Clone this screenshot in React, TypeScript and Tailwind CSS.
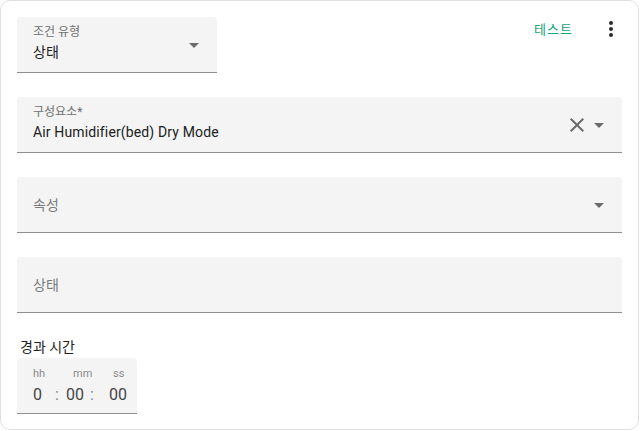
import React from "react";

const font = { fontFamily: "Roboto, 'Noto Sans CJK KR', sans-serif" };

function ArrowDown() {
  return (
    <svg width="24" height="24" viewBox="0 0 24 24" className="shrink-0">
      <path d="M7 10l5 5 5-5z" fill="#6b6b6b" />
    </svg>
  );
}

function ClearIcon() {
  return (
    <svg width="24" height="24" viewBox="0 0 24 24" className="shrink-0">
      <path
        d="M19 6.41L17.59 5 12 10.59 6.41 5 5 6.41 10.59 12 5 17.59 6.41 19 12 13.41 17.59 19 19 17.59 13.41 12z"
        fill="#6b6b6b"
      />
    </svg>
  );
}

function DotsIcon() {
  return (
    <svg width="24" height="24" viewBox="0 0 24 24">
      <path
        d="M12 16a2 2 0 0 1 2 2 2 2 0 0 1-2 2 2 2 0 0 1-2-2 2 2 0 0 1 2-2m0-6a2 2 0 0 1 2 2 2 2 0 0 1-2 2 2 2 0 0 1-2-2 2 2 0 0 1 2-2m0-6a2 2 0 0 1 2 2 2 2 0 0 1-2 2 2 2 0 0 1-2-2 2 2 0 0 1 2-2z"
        fill="#2b2b2b"
      />
    </svg>
  );
}

interface FieldProps {
  label: string;
  value?: string;
  clearable?: boolean;
  arrow?: boolean;
  className?: string;
}

// filled select with floating label, or a placeholder when empty
function Field({ label, value, clearable, arrow = true, className = "" }: FieldProps) {
  return (
    <div
      className={`h-14 flex items-center bg-[#f4f4f4] rounded-t border-b border-[#8f8f8f] pl-4 pr-[11px] ${className}`}
    >
      {value ? (
        <div className="flex-1 flex flex-col -mt-[2px]">
          <span className="text-[12px] leading-4 text-[#707070]">{label}</span>
          <span className="text-[14px] leading-6 tracking-[0.01em] text-[#212121]">{value}</span>
        </div>
      ) : (
        <span className="flex-1 text-[14px] leading-6 text-[#7a7a7a]">{label}</span>
      )}
      {clearable && (
        <div className="mr-[-2px]">
          <ClearIcon />
        </div>
      )}
      {arrow && <ArrowDown />}
    </div>
  );
}

export default function App() {
  return (
    <div className="w-[639px] h-[430px] bg-white border border-[#e0e0e0] rounded-[10px] p-4" style={font}>
      {/* header row */}
      <div className="flex items-start">
        <Field label="조건 유형" value="상태" className="w-[200px]" />
        <div className="flex-1" />
        <span className="mt-[3px] text-[13px] tracking-[0.08em] text-[#14a37a] mr-[26px] leading-5">테스트</span>
        <div className="mr-[-1px]">
          <DotsIcon />
        </div>
      </div>

      <div className="mt-6 flex flex-col gap-6">
        <Field label="구성요소*" value="Air Humidifier(bed) Dry Mode" clearable />
        <Field label="속성" />
        <Field label="상태" arrow={false} />
      </div>

      {/* duration */}
      <div className="mt-[24px]">
        <div className="pl-[3px] text-[14px] leading-5 text-[#212121]">경과 시간</div>
        <div className="w-[120px] h-[56px] bg-[#f4f4f4] rounded-t border-b border-[#8f8f8f] pl-4 pt-[8px] mt-[1px]">
          <div className="flex text-[11px] leading-4 text-[#8a8a8a]">
            <span className="w-[40px]">hh</span>
            <span className="w-[40px]">mm</span>
            <span>ss</span>
          </div>
          <div className="flex text-[16px] leading-6 text-[#444444] mt-[1px]">
            <span className="w-[22px]">0</span>
            <span className="w-[11px] text-[#8a8a8a]">:</span>
            <span className="w-[24px]">00</span>
            <span className="w-[19px] text-[#8a8a8a]">:</span>
            <span>00</span>
          </div>
        </div>
      </div>
    </div>
  );
}
